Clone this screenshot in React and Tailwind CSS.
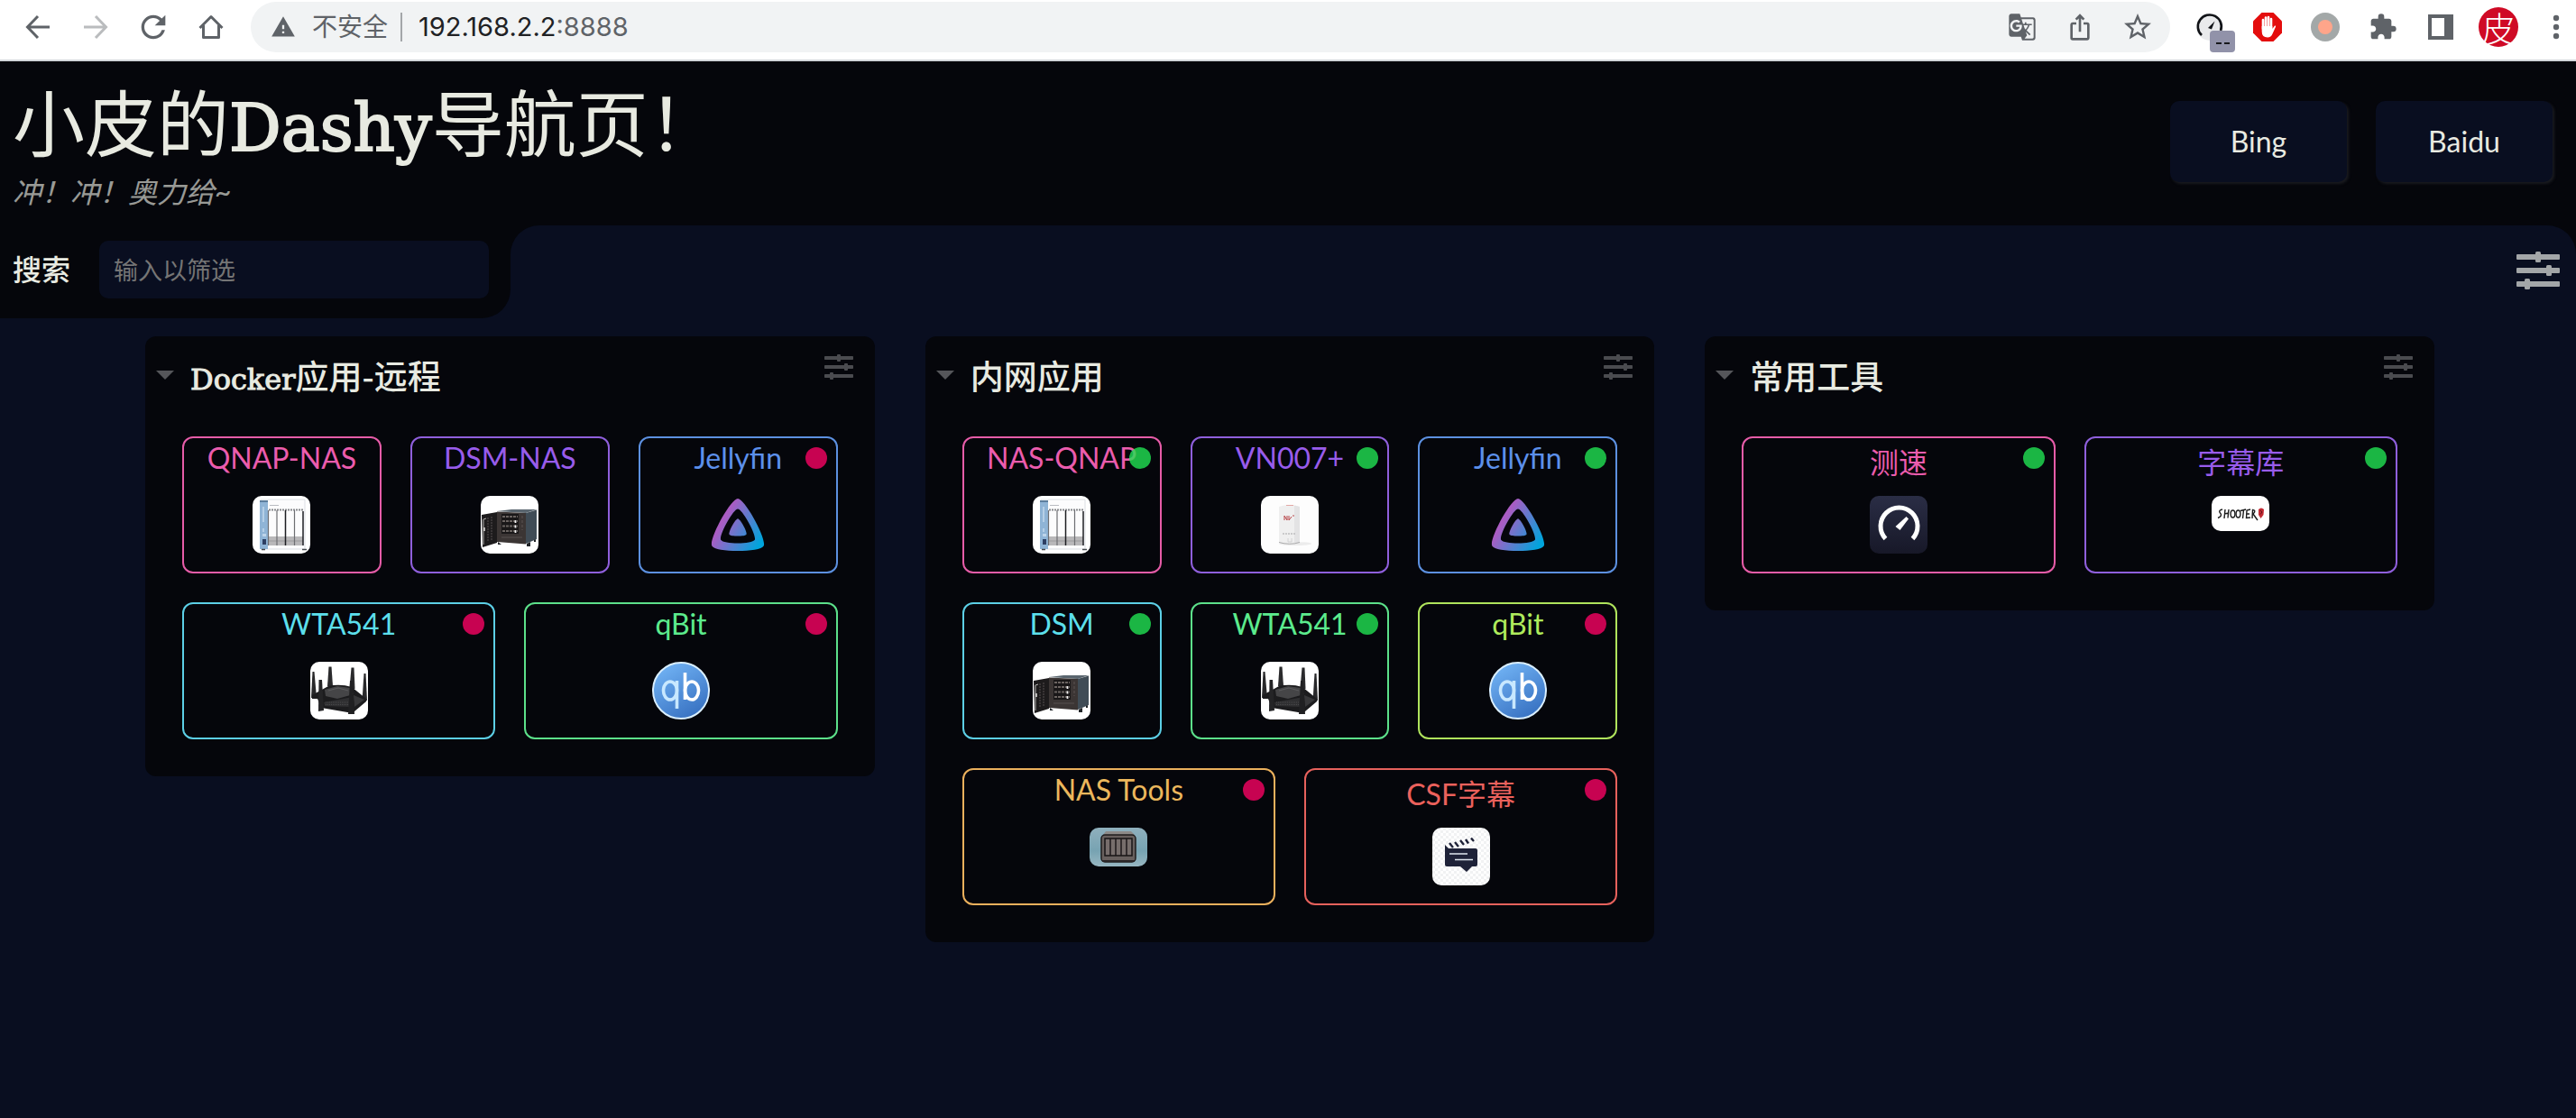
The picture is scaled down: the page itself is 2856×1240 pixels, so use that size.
import { useState } from 'react';
import clsx from 'clsx';
import { MdGTranslate, MdIosShare, MdStarBorder, MdExtension, MdRefresh, MdWarning } from 'react-icons/md';

const sections = [
  {
    title: 'Docker应用-远程',
    items: [
      { name: 'QNAP-NAS', icon: 'qnap' },
      { name: 'DSM-NAS', icon: 'dsm' },
      { name: 'Jellyfin', icon: 'jellyfin', status: 'down' },
      { name: 'WTA541', icon: 'router', status: 'down', wide: true },
      { name: 'qBit', icon: 'qbit', status: 'down', wide: true },
    ],
  },
  {
    title: '内网应用',
    items: [
      { name: 'NAS-QNAP', icon: 'qnap', status: 'up' },
      { name: 'VN007+', icon: 'cpe', status: 'up' },
      { name: 'Jellyfin', icon: 'jellyfin', status: 'up' },
      { name: 'DSM', icon: 'dsm', status: 'up' },
      { name: 'WTA541', icon: 'router', status: 'up' },
      { name: 'qBit', icon: 'qbit', status: 'down' },
      { name: 'NAS Tools', icon: 'nastools', status: 'down', wide: true },
      { name: 'CSF字幕', icon: 'csf', status: 'down', wide: true },
    ],
  },
  {
    title: '常用工具',
    items: [
      { name: '测速', icon: 'speed', status: 'up', wide: true },
      { name: '字幕库', icon: 'shooter', status: 'up', wide: true },
    ],
  },
];

// one colour per position in the section
const itemColors = [
  'border-[#e65ca8] text-[#eb5cad]',
  'border-[#8f5fdc] text-[#985ceb]',
  'border-[#5c90e0] text-[#5c90eb]',
  'border-[#5ccfe6] text-[#5cdfeb]',
  'border-[#5ce08a] text-[#5ceb8d]',
  'border-[#afe35c] text-[#afeb5c]',
  'border-[#ebb05c] text-[#ebb75c]',
  'border-[#e6615c] text-[#eb615c]',
];

function BackIcon({ className }) {
  return (
    <svg viewBox="0 0 32 32" className={clsx('size-8', className)} fill="none" stroke="currentColor" strokeWidth="3">
      <path d="M29 16H5M16 4L4.500 16L16 28" />
    </svg>
  );
}

function HomeIcon() {
  return (
    <svg viewBox="0 0 32 32" className="size-8" fill="none" stroke="currentColor" strokeWidth="3" strokeLinejoin="round">
      <path d="M3.500 17L16 4.500L28.500 17" />
      <path d="M7.500 14V27.500H24.500V14" />
    </svg>
  );
}

function GaugeIcon() {
  return (
    <svg viewBox="0 0 32 32" className="size-8">
      <circle cx="16" cy="16" r="15" fill="#e9eaec" />
      <path d="M7 25A13 13 0 1 1 28 20" fill="none" stroke="#111317" strokeWidth="2.600" />
      <path d="M21.500 9.500L18 18.500L14 17Z" fill="#111317" />
    </svg>
  );
}

function BlockIcon() {
  return (
    <svg viewBox="0 0 32 32" className="size-8">
      <path d="M9.500 0H22.500L32 9.500V22.500L22.500 32H9.500L0 22.500V9.500Z" fill="#e40d0d" />
      <g stroke="#fff" strokeWidth="2.600" strokeLinecap="round">
        <path d="M11 8V18M14 5.500V18M17 5V18M20 7V18" />
      </g>
      <path d="M9.700 15H21.300V18L24 14.500Q25.600 14 25 15.800L21.500 23.500Q20 27.500 16 27.500Q9.700 27.500 9.700 21Z" fill="#fff" />
    </svg>
  );
}

function TargetIcon() {
  return (
    <svg viewBox="0 0 32 32" className="size-8">
      <circle cx="16" cy="16" r="16" fill="#a3a8a8" />
      <circle cx="16" cy="16" r="8" fill="#ffa58a" />
    </svg>
  );
}

function PanelIcon() {
  return (
    <svg viewBox="0 0 28 28" className="size-7" fill="currentColor" fillRule="evenodd">
      <path d="M0 0H28V28H0ZM4 4V24H18V4Z" />
    </svg>
  );
}

function DotsIcon() {
  return (
    <svg viewBox="0 0 8 28" className="h-7 w-2" fill="currentColor">
      <circle cx="4" cy="4" r="3.200" />
      <circle cx="4" cy="14" r="3.200" />
      <circle cx="4" cy="24" r="3.200" />
    </svg>
  );
}

function SlidersIcon({ className }) {
  return (
    <svg viewBox="0 0 48 42" className={className} fill="currentColor">
      <rect y="3" width="48" height="6" rx="1" />
      <rect y="18" width="48" height="6" rx="1" />
      <rect y="33" width="48" height="6" rx="1" />
      <rect x="21" width="6" height="12" rx="1.500" />
      <rect x="33" y="15" width="6" height="12" rx="1.500" />
      <rect x="9" y="30" width="6" height="12" rx="1.500" />
    </svg>
  );
}

function QnapIcon() {
  return (
    <svg viewBox="0 0 64 64" className="size-16 rounded-[10px]">
      <rect width="64" height="64" fill="#fff" />
      <path d="M9 4H58V59H9Z" fill="#fcfcfd" stroke="#dcdfe4" />
      <path d="M8 5H17V59H8Z" fill="#8fb4d6" />
      <path d="M8 5H17V7H8Z" fill="#5d7f9f" />
      <path d="M12 12V29M12 36V40" stroke="#dcebf8" />
      <rect x="11" y="42" width="4" height="3" fill="#bdd4ea" />
      <rect x="11" y="48" width="4" height="6" fill="#2d3f63" />
      <path d="M19 10.500H29" stroke="#b9bcc2" />
      <path d="M18 15.500H56" stroke="#85878b" strokeWidth="2" strokeDasharray="2 1" />
      <path d="M18 45H56V55H18Z" fill="#b9b8ba" />
      <path d="M18 50H56" stroke="#9b9a9c" />
      <path d="M17.500 16V55M27 16V55M46.500 16V55" stroke="#6d6e72" strokeWidth="1.200" />
      <path d="M36.500 16V55M56 17V55" stroke="#1d1e22" strokeWidth="1.500" />
      <path d="M10 59.500H14M55 59.500H60" stroke="#44484e" strokeWidth="1.500" />
    </svg>
  );
}

function DsmIcon() {
  return (
    <svg viewBox="0 0 64 64" className="size-16 rounded-[10px]">
      <rect width="64" height="64" fill="#fff" />
      <path d="M18 17L34 15H62L50 19Z" fill="#5a666f" />
      <path d="M50 19L62 15.500V48L50 53Z" fill="#404c56" />
      <path d="M18 17.500L50 19V53.500L18 51Z" fill="#3b3534" />
      <path d="M1 21L18 18V52L2 57Z" fill="#1d1b1c" />
      <path d="M3 26V54M3 26L6 25" stroke="#b4b2b0" />
      <path d="M4 35V39" stroke="#e6e4e2" strokeWidth="1.500" />
      <path d="M8 24V50M12 23V49" stroke="#393536" strokeWidth="2" strokeDasharray="2 1" />
      <path d="M23 20H42V42H23Z" fill="#191718" />
      <path d="M24 23H41M24 28H41M24 33.500H41M24 39H41" stroke="#6b6461" strokeWidth="2" strokeDasharray="3 1" />
      <path d="M38.500 27V30M38.500 32.500V35.500M38.500 38V41" stroke="#f3f3f3" strokeWidth="1.800" />
      <path d="M46 22V38" stroke="#5c5552" strokeDasharray="3 2" />
      <path d="M23 46H46" stroke="#57504e" />
      <path d="M19 51V54H23M51 53V56H55V51M59 49V51H61V48" fill="#202326" />
    </svg>
  );
}

function JellyfinIcon() {
  return (
    <svg viewBox="0 0 512 512" className="size-16">
      <linearGradient id="jellyfin" gradientUnits="userSpaceOnUse" x1="126" y1="219" x2="458" y2="411">
        <stop offset="0" stopColor="#aa5cc3" />
        <stop offset="1" stopColor="#00a4dc" />
      </linearGradient>
      <path
        fill="url(#jellyfin)"
        d="M256 201.600c-20.400 0-86.200 119.300-76.200 139.400s142.500 19.900 152.400 0S276.500 201.600 256 201.600z"
      />
      <path
        fill="url(#jellyfin)"
        d="M256 23.300c-61.600 0-259.800 359.400-229.600 420.100s429.300 60 459.200 0S317.600 23.300 256 23.300z M406.500 390.800c-19.600 39.300-281.100 39.800-300.900 0s110.100-275.300 150.400-275.300S426.100 351.400 406.500 390.800z"
      />
    </svg>
  );
}

function RouterIcon() {
  return (
    <svg viewBox="0 0 64 64" className="size-16 rounded-[10px]">
      <rect width="64" height="64" fill="#fff" />
      <path d="M20.500 5.500H23.500L25 27H19Z" fill="#2a2a2c" />
      <path d="M45.500 6.500H48.500L49.500 30H43.500Z" fill="#2a2a2c" />
      <path d="M2.500 11H4.500L7 40H1Z" fill="#28282a" />
      <path d="M59.500 13H61.500L63 43H57.500Z" fill="#28282a" />
      <path d="M2 37L20 27Q33 24 46 28L62 41V44L49 55L47 57L12 51L8 41H2Z" fill="#1c1c1e" />
      <path d="M16 31L30 27L44 29L48 36L30 41L17 38Z" fill="#454547" />
      <path d="M20 32L31 29L42 32" fill="none" stroke="#5c5c5e" />
      <path d="M15 45L31 42L47 39L44 50L16 49Z" fill="#2f2f31" />
      <path d="M17 45H43M17 47.500H43" stroke="#4a4a4c" strokeDasharray="1 1" />
      <path d="M48 37L60 42L49 50Z" fill="#38383a" />
      <path d="M9.500 20H13L15 54L9 55Z" fill="#242426" />
      <path d="M44 21H47L49 58H42Z" fill="#202022" />
    </svg>
  );
}

function QbitIcon() {
  return (
    <svg viewBox="0 0 64 64" className="size-16">
      <linearGradient id="qbit" x1="0.200" y1="0" x2="0.800" y2="1">
        <stop offset="0" stopColor="#72b4f5" />
        <stop offset="1" stopColor="#356ebf" />
      </linearGradient>
      <circle cx="32" cy="32" r="31" fill="url(#qbit)" stroke="#daefff" strokeWidth="2" />
      <g fill="none" strokeWidth="3.600">
        <path d="M27.500 21V52" stroke="#c8e8ff" />
        <ellipse cx="20" cy="32" rx="7.500" ry="10" stroke="#c8e8ff" />
        <path d="M36.500 12V42" stroke="#fff" />
        <ellipse cx="44" cy="32" rx="7.500" ry="10" stroke="#fff" />
      </g>
    </svg>
  );
}

function CpeIcon() {
  return (
    <svg viewBox="0 0 64 64" className="size-16 rounded-[10px]">
      <rect width="64" height="64" fill="#fdfdfd" />
      <ellipse cx="38" cy="53" rx="18" ry="2" fill="#ececec" />
      <path d="M20 12Q32 8 43 12V52Q32 55.500 20 52Z" fill="#efefef" />
      <path d="M37 10.500L43 12V52L37 53.500Z" fill="#e3e3e4" />
      <path d="M20 51.500Q32 55 43 51.500" fill="none" stroke="#a9a9aa" />
      <path d="M28 10.500H36" stroke="#e3a7a5" />
      <path d="M26 22V27M26 22L29 27V22M31 22V27L34 23M35 22H37" fill="none" stroke="#b8474a" />
      <path d="M24 42H39" stroke="#bfbfc0" strokeWidth="1.500" strokeDasharray="2 1" />
      <path d="M30 47V51H34V47" fill="none" stroke="#d2d2d3" />
    </svg>
  );
}

function NasToolsIcon() {
  return (
    <svg viewBox="0 0 64 43" className="h-[43px] w-16 rounded-[10px]">
      <linearGradient id="nastools" x1="0" y1="0" x2="0" y2="1">
        <stop offset="0" stopColor="#8fb0bd" />
        <stop offset="0.600" stopColor="#77a3b2" />
        <stop offset="1" stopColor="#98b7c2" />
      </linearGradient>
      <rect width="64" height="43" fill="url(#nastools)" />
      <path d="M15 8L18 4H46L50 8Z" fill="#8d8a88" />
      <rect x="13" y="8" width="38" height="30" rx="4" fill="#68605e" stroke="#1f1c1d" strokeWidth="1.500" />
      <rect x="17" y="12" width="30" height="19" fill="#776e6c" stroke="#171516" strokeWidth="1.500" />
      <path d="M23 12V31M29 12V31M35 12V31M41 12V31" stroke="#1c191a" strokeWidth="1.500" />
      <path d="M14 37H50" stroke="#2a2627" strokeWidth="2" />
    </svg>
  );
}

function CsfIcon() {
  return (
    <svg viewBox="0 0 64 64" className="size-16 rounded-[10px]">
      <pattern id="checker" width="6" height="6" patternUnits="userSpaceOnUse">
        <rect width="6" height="6" fill="#fff" />
        <path d="M0 0H3V3H0ZM3 3H6V6H3Z" fill="#f1f2f3" />
      </pattern>
      <rect width="64" height="64" fill="url(#checker)" />
      <path d="M14 19L18 23H48Q50 23 50 25V41Q50 43 48 43H44L38 49L31 43H16Q14 43 14 41Z" fill="#1e2238" />
      <path d="M19 17L23 22M25 16L29 21M31 14L35 19M37 13L40 17.500M43 11.500L46 15" stroke="#1e2238" strokeWidth="2.400" />
      <path d="M19 29H39M25 35.500H45" stroke="#dfe6ee" strokeWidth="1.600" />
    </svg>
  );
}

function SpeedIcon() {
  return (
    <svg viewBox="0 0 64 64" className="size-16 rounded-[10px]">
      <linearGradient id="speed" x1="0" y1="0" x2="0" y2="1">
        <stop offset="0" stopColor="#2a2d45" />
        <stop offset="1" stopColor="#171828" />
      </linearGradient>
      <rect width="64" height="64" fill="url(#speed)" />
      <path d="M17.500 47.500A20.500 20.500 0 1 1 47.500 47.500" fill="none" stroke="#fff" strokeWidth="5" />
      <path d="M40.500 23L43 25.500L33.500 38L28.500 34Z" fill="#fff" />
    </svg>
  );
}

function ShooterIcon() {
  return (
    <svg viewBox="0 0 64 39" className="h-[39px] w-16 rounded-[10px]">
      <rect width="64" height="39" fill="#fff" />
      <g fill="none" stroke="#1b1b1b" strokeWidth="1.400">
        <path d="M12 15Q7 16 9.500 19Q12.500 22 7 24.500" />
        <path d="M15 15L14 25M19 15L18 24.500M14 20L19 19" />
        <ellipse cx="23.500" cy="20" rx="2.400" ry="4" />
        <ellipse cx="29.500" cy="20" rx="2.400" ry="4" />
        <path d="M32 16.500L38 15M35.500 16L34.500 25" />
        <path d="M43 15L39 16L38.500 24.500L43 24M39 20H42" />
        <path d="M45 25L45.500 15.500Q50 16 46 20L51 27" />
      </g>
      <path d="M52 15Q55 12 58 15L57.500 21L54.500 25L52 21Z" fill="#c22a33" />
      <path d="M54 16L56 18L54 20.500" fill="none" stroke="#5c1218" />
    </svg>
  );
}

const icons = {
  qnap: QnapIcon,
  dsm: DsmIcon,
  jellyfin: JellyfinIcon,
  router: RouterIcon,
  qbit: QbitIcon,
  cpe: CpeIcon,
  nastools: NasToolsIcon,
  csf: CsfIcon,
  speed: SpeedIcon,
  shooter: ShooterIcon,
};

function ToolButton({ label, className, children }) {
  return (
    <button type="button" aria-label={label} className={clsx('flex h-14 w-16 items-center justify-center', className)}>
      {children}
    </button>
  );
}

function BrowserBar() {
  return (
    <div className="flex items-start border-b-2 border-[#d3d6da] bg-white pt-0.5 pb-2 pl-2.5 font-['Inter','Noto_Sans_CJK_SC',sans-serif] text-[28px] text-[#5f6368]">
      <ToolButton label="Back"><BackIcon /></ToolButton>
      <ToolButton label="Forward"><BackIcon className="rotate-180 text-[#babcbe]" /></ToolButton>
      <ToolButton label="Reload"><MdRefresh className="size-10" /></ToolButton>
      <ToolButton label="Home"><HomeIcon /></ToolButton>
      <div className="mx-3 flex h-14 flex-1 items-center rounded-full bg-[#f1f3f4] pr-1 pl-[22px]">
        <button type="button" className="flex items-center gap-[18px]">
          <MdWarning className="size-7" />
          <span>不安全</span>
        </button>
        <span className="mr-4 ml-3.5 h-8 w-0.5 bg-[#a3a6a9]" />
        <span className="flex-1 pl-0.5 text-[29px]">
          <span className="text-[#202124]">192.168.2.2</span>:8888
        </span>
        <ToolButton label="Translate"><MdGTranslate className="size-8" /></ToolButton>
        <ToolButton label="Share"><MdIosShare className="size-8" /></ToolButton>
        <ToolButton label="Bookmark"><MdStarBorder className="size-9" /></ToolButton>
      </div>
      <ToolButton label="Speedtest" className="relative">
        <GaugeIcon />
        <span className="absolute top-8 left-8 flex h-6 w-7 items-center justify-center gap-[3px] rounded-[4px] bg-[#9192a9] pt-1">
          <span className="h-0.5 w-1.5 bg-[#17181c]" />
          <span className="h-0.5 w-1.5 bg-[#17181c]" />
        </span>
      </ToolButton>
      <ToolButton label="AdBlock"><BlockIcon /></ToolButton>
      <ToolButton label="Recorder"><TargetIcon /></ToolButton>
      <ToolButton label="Extensions"><MdExtension className="size-8" /></ToolButton>
      <ToolButton label="Side panel"><PanelIcon /></ToolButton>
      <ToolButton label="Profile">
        <span className="flex size-11 items-center justify-center rounded-full bg-[#cf0a25] font-['Noto_Sans_CJK_SC',sans-serif] text-[38px] leading-[44px] font-light text-white">
          皮
        </span>
      </ToolButton>
      <ToolButton label="Menu" className="-mr-2.5"><DotsIcon /></ToolButton>
    </div>
  );
}

function Header() {
  return (
    <header className="flex items-start justify-between bg-[#05060b] pt-4 pr-[26px] pb-[17px] pl-3.5">
      <div>
        <h1 className="font-['Noto_Sans_CJK_SC',sans-serif] text-[80px] leading-[96px]">
          小皮的
          <span className="font-['DejaVu_Serif',serif] text-[72px] leading-none [-webkit-text-stroke:2px_currentColor]">Dashy</span>
          导航页！
        </h1>
        <p className="mt-[13px] text-[32px] leading-10 italic opacity-65">冲！冲！奥力给~</p>
      </div>
      <nav className="mt-7 flex gap-8">
        {['Bing', 'Baidu'].map((name) => (
          <a
            key={name}
            href={`https://www.${name.toLowerCase()}.com`}
            className="flex h-[90px] w-[196px] items-center justify-center rounded-[10px] bg-[#090e20] text-[32px] shadow-[2px_2px_3px_#1a1b20]"
          >
            {name}
          </a>
        ))}
      </nav>
    </header>
  );
}

function SearchBar({ query, onChange }) {
  return (
    <div className="flex bg-linear-to-b from-[#05060b] from-50% to-[#090e20] to-50%">
      <form className="flex items-center rounded-br-4xl bg-[#05060b] pt-[17px] pr-6 pb-[22px] pl-3.5" onSubmit={(e) => e.preventDefault()}>
        <label htmlFor="search" className="mr-8 text-[32px] leading-none font-medium">
          搜索
        </label>
        <input
          id="search"
          type="text"
          value={query}
          onChange={(e) => onChange(e.target.value)}
          placeholder="输入以筛选"
          className="h-16 w-[432px] rounded-[10px] bg-[#090e20] px-4 text-[27px] outline-none placeholder:text-[#757575]"
        />
      </form>
      <div className="flex flex-1 items-center justify-end rounded-t-4xl bg-[#090e20] pr-[18px] pb-1">
        <button type="button" aria-label="Settings" className="text-[#a3a6a8]">
          <SlidersIcon className="h-[42px] w-12" />
        </button>
      </div>
    </div>
  );
}

function Item({ item, color }) {
  const Icon = icons[item.icon];
  return (
    <a
      href={`#${item.icon}`}
      className={clsx(
        'relative flex h-[152px] flex-col items-center rounded-xl border-2',
        item.wide ? 'col-span-3' : 'col-span-2',
        color,
      )}
    >
      <span className="h-16 pt-0.5 text-[32px] leading-[normal] whitespace-nowrap">{item.name}</span>
      <Icon />
      {item.status && (
        <span
          className={clsx(
            'absolute top-2.5 right-2.5 size-6 rounded-full opacity-80',
            item.status === 'up' ? 'bg-[#20e253]' : 'bg-[#f80363]',
          )}
        />
      )}
    </a>
  );
}

function Section({ title, items }) {
  const [open, setOpen] = useState(true);
  return (
    <section className="rounded-xl bg-[#05060b] pb-[41px]">
      <div className="flex items-start justify-between pt-4 pr-6 pl-3">
        <h2>
          <button
            type="button"
            onClick={() => setOpen(!open)}
            className="flex items-center gap-[18px] font-['Noto_Sans_CJK_SC',sans-serif] text-[37px] leading-[54px] font-medium"
          >
            <svg viewBox="0 0 20 10" className={clsx('h-2.5 w-5', !open && '-rotate-90')} fill="#55565a">
              <path d="M0 0H20L10 10Z" />
            </svg>
            <span>
              {title.startsWith('Docker') && (
                <span className="font-['DejaVu_Serif',serif] text-[32px] leading-none [-webkit-text-stroke:1px_currentColor]">
                  Docker
                </span>
              )}
              {title.replace('Docker', '')}
            </span>
          </button>
        </h2>
        <button type="button" aria-label={`${title} options`} className="mt-1 text-[#4a4b4f]">
          <SlidersIcon className="h-7 w-8" />
        </button>
      </div>
      {open && (
        <div className="mt-[41px] grid grid-cols-6 gap-8 px-[41px]">
          {items.map((item, i) => (
            <Item key={item.name} item={item} color={itemColors[i % itemColors.length]} />
          ))}
        </div>
      )}
    </section>
  );
}

export default function App() {
  const [query, setQuery] = useState('');
  const visible = sections
    .map((s) => ({ ...s, items: s.items.filter((i) => i.name.toLowerCase().includes(query.toLowerCase())) }))
    .filter((s) => s.items.length > 0);

  return (
    <div className="flex min-h-screen flex-col bg-[#090e20] font-['Lato','Noto_Sans_CJK_SC',sans-serif] text-[#e8eae1]">
      <BrowserBar />
      <Header />
      <SearchBar query={query} onChange={setQuery} />
      <main className="grid grid-cols-3 items-start gap-14 pt-5 pr-[157px] pl-[161px]">
        {visible.map((section) => (
          <Section key={section.title} title={section.title} items={section.items} />
        ))}
      </main>
    </div>
  );
}
